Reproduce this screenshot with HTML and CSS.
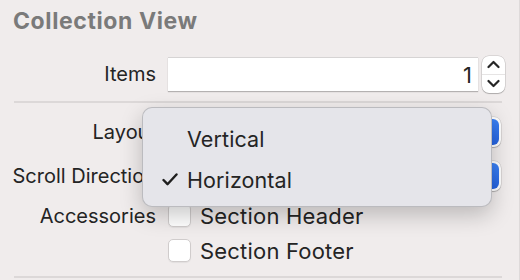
FILE: index.html
```html
<!DOCTYPE html>
<html lang="en">
<head>
  <meta charset="UTF-8" />
  <meta name="viewport" content="width=device-width, initial-scale=1.0"/>
  <title>Collection View Inspector</title>
  <link rel="stylesheet" href="styles.css">
</head>
<body>

  <div class="inspector">
    <h2 class="title">Collection View</h2>

    <div class="row row-items">
      <span class="label">Items</span>
      <div class="field-group">
        <div class="text-field">1</div>
        <div class="stepper">
          <svg class="chev" width="13" height="9" viewBox="0 0 13 9"><path d="M1.5 7 L6.5 2 L11.5 7" /></svg>
          <svg class="chev" width="13" height="9" viewBox="0 0 13 9"><path d="M1.5 2 L6.5 7 L11.5 2" /></svg>
        </div>
      </div>
    </div>

    <div class="separator"></div>

    <div class="row row-popup">
      <span class="label">Layout</span>
      <div class="popup-button"><span class="popup-arrows"></span></div>
    </div>
    <div class="row row-popup">
      <span class="label">Scroll Direction</span>
      <div class="popup-button"><span class="popup-arrows"></span></div>
    </div>
    <div class="row row-check">
      <span class="label">Accessories</span>
      <label class="check"><span class="box"></span>Section Header</label>
    </div>
    <div class="row row-check">
      <span class="label"></span>
      <label class="check"><span class="box"></span>Section Footer</label>
    </div>

    <div class="separator"></div>

    <!-- open popup menu for Scroll Direction -->
    <div class="menu">
      <div class="menu-item"><span class="mark"></span>Vertical</div>
      <div class="menu-item">
        <span class="mark">
          <svg width="16" height="13" viewBox="0 0 16 13"><path d="M1.5 7 L5.5 11.2 L14.5 1.5" /></svg>
        </span>Horizontal
      </div>
    </div>
  </div>

</body>
</html>
```

FILE: styles.css
```css
body {
  margin: 0;
  background: #f0ecec;
  font-family: Inter, "Liberation Sans", sans-serif;
  color: #242424;
}
.inspector {
  position: relative;
  width: 520px;
  height: 280px;
  overflow: hidden;
  border-right: 1px solid #dedada;
  box-sizing: border-box;
}
.title {
  margin: 0;
  padding: 7px 0 0 13px;
  height: 55px;
  box-sizing: border-box;
  font-size: 23px;
  line-height: 28px;
  letter-spacing: 0.6px;
  font-weight: 700;
  color: #7a7a7a;
}
.row {
  display: flex;
  align-items: center;
  gap: 12px;
  padding-right: 16px;
}
.row-items {
  height: 38px;
}
.row-popup {
  height: 44px;
}
.row-check {
  height: 35px;
}
.label {
  width: 156px;
  flex: none;
  text-align: right;
  font-size: 20px;
  white-space: nowrap;
}
.separator {
  height: 2px;
  background: #dcd8d8;
  margin: 8px 17px 7px 14px;
}
.field-group {
  display: flex;
  align-items: center;
  gap: 4px;
}
.text-field {
  width: 310px;
  height: 34px;
  box-sizing: border-box;
  background: #fff;
  border-top: 1px solid #d6d4d4;
  box-shadow: 0 1px 1px rgba(0, 0, 0, 0.25);
  text-align: right;
  padding-right: 6px;
  font-size: 22px;
  line-height: 34px;
}
.stepper {
  width: 23px;
  height: 37px;
  background: #fff;
  border-radius: 7px;
  box-shadow: 0 0 0 0.5px rgba(0, 0, 0, 0.18), 0 1px 1px rgba(0, 0, 0, 0.2);
  display: flex;
  flex-direction: column;
  align-items: center;
  justify-content: space-around;
  background-image: linear-gradient(#fff 49%, #e6e4e4 50%, #fff 52%);
}
.chev path {
  fill: none;
  stroke: #262626;
  stroke-width: 2.2;
  stroke-linecap: round;
  stroke-linejoin: round;
}
.popup-button {
  flex: 1;
  height: 30px;
  background: #fff;
  border-radius: 7px;
  box-shadow: 0 0 0 0.5px rgba(0, 0, 0, 0.15), 0 1px 1px rgba(0, 0, 0, 0.2);
  display: flex;
  justify-content: flex-end;
  padding: 2px;
  box-sizing: border-box;
  margin-right: 2px;
}
.popup-arrows {
  width: 22px;
  height: 26px;
  border-radius: 6px;
  background: linear-gradient(#3b82f6, #2563e0);
}
.check {
  display: flex;
  align-items: center;
  gap: 9px;
  font-size: 22px;
  letter-spacing: 0.2px;
}
.box {
  width: 23px;
  height: 23px;
  box-sizing: border-box;
  background: #fff;
  border-radius: 5px;
  border: 1px solid #d0cccc;
  box-shadow: 0 1px 1px rgba(0, 0, 0, 0.06);
}
.menu {
  position: absolute;
  left: 142px;
  top: 107px;
  width: 350px;
  height: 100px;
  box-sizing: border-box;
  padding-top: 10px;
  background: #e5e5ea;
  border-radius: 10px;
  border: 1px solid rgba(0, 0, 0, 0.18);
  box-shadow: 0 8px 22px rgba(0, 0, 0, 0.22);
}
.menu-item {
  display: flex;
  align-items: center;
  height: 41px;
  font-size: 21.5px;
  letter-spacing: 0.1px;
}
.mark {
  width: 44px;
  flex: none;
  display: flex;
  justify-content: flex-end;
}
.mark svg {
  margin-right: 9px;
}
.mark path {
  fill: none;
  stroke: #1e1e1e;
  stroke-width: 2.4;
  stroke-linecap: round;
  stroke-linejoin: round;
}
```
